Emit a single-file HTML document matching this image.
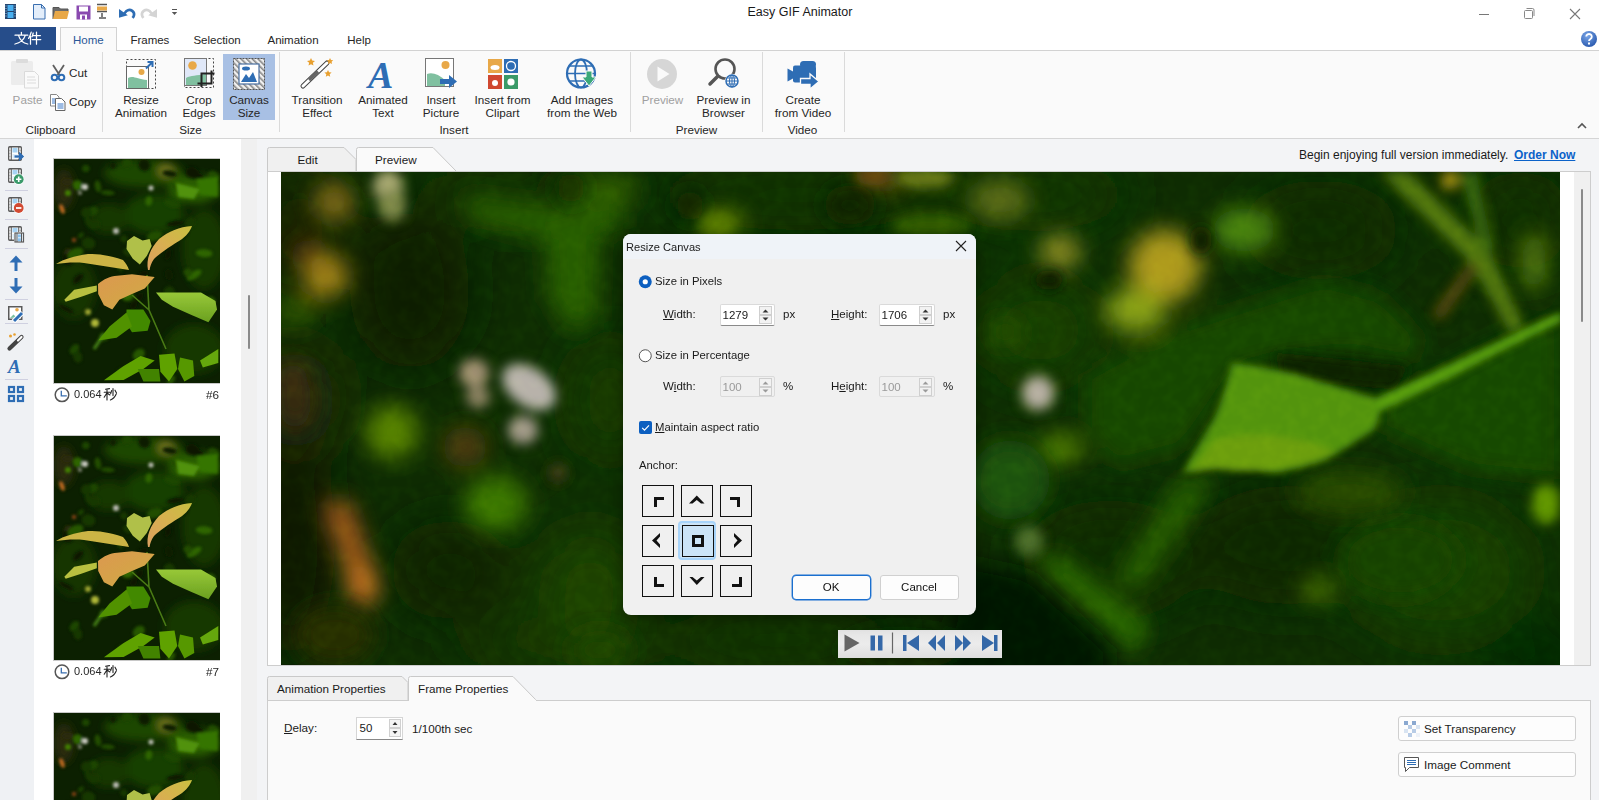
<!DOCTYPE html>
<html><head><meta charset="utf-8">
<style>
*{margin:0;padding:0;box-sizing:border-box}
html,body{width:1599px;height:800px;overflow:hidden;background:#fff;font-family:"Liberation Sans",sans-serif;font-size:12px;color:#1e1e1e}
.a{position:absolute}
.t{position:absolute;white-space:nowrap;line-height:1}
svg{position:absolute;overflow:visible}
</style></head><body>
<div class="a" style="left:0px;top:0px;width:1599px;height:51px;background:#fff"></div>
<div class="t" style="left:747.5px;top:5.62px;font-size:12.5px;color:#1a1a1a;">Easy GIF Animator</div>
<svg style="left:0;top:0" width="200" height="27" viewBox="0 0 200 27">
<rect x="5" y="4" width="11" height="15" fill="#24446e"/>
<rect x="7.5" y="5" width="6" height="6" fill="#4ab0f0"/>
<rect x="7.5" y="12" width="6" height="6" fill="#4ab0f0"/>
<path d="M6 5.5v1M6 8v1M6 10.5v1M6 13v1M6 15.5v1M15 5.5v1M15 8v1M15 10.5v1M15 13v1M15 15.5v1" stroke="#9ad0f8" stroke-width="1"/>
<path d="M33.5 4.5h8l3.5 3.5v11h-11.5z" fill="#e4eefa" stroke="#3a6fb0"/>
<path d="M41.5 4.5v3.5h3.5" fill="none" stroke="#3a6fb0"/>
<path d="M53 19V7.5h6l1.5 1.5h7.5v2" fill="#6a6a6a" stroke="#555"/>
<path d="M55 11h14l-2 8h-14z" fill="#e8a848"/>
<rect x="76.5" y="5.5" width="14" height="14" fill="#8a4ab0"/>
<rect x="79" y="6.5" width="9" height="5" fill="#fff"/>
<rect x="80" y="14.5" width="7" height="5" fill="#fff"/>
<rect x="82" y="15.5" width="3" height="4" fill="#8a4ab0"/>
<path d="M97 4.5h10M97 11.5h10" stroke="#555" stroke-width="1.5"/>
<rect x="97" y="6.5" width="10" height="4" fill="#e8a848"/>
<path d="M102 13v4M99 18h7" stroke="#555" stroke-width="1.5"/>
<path d="M119 9L119 17.8L127.8 15.2Z" fill="#2e6db4"/>
<path d="M123.5 14.5 L126.5 11 A4.6 4.6 0 0 1 133.6 16.5 L132.5 17.8" fill="none" stroke="#2e6db4" stroke-width="2.6"/>
<path d="M157 9L157 17.8L148.2 15.2Z" fill="#d4d4d4"/>
<path d="M152.5 14.5 L149.5 11 A4.6 4.6 0 0 0 142.4 16.5 L143.5 17.8" fill="none" stroke="#d4d4d4" stroke-width="2.6"/>
<path d="M172 9.5h5" stroke="#555" stroke-width="1"/>
<path d="M171.8 12h5.4l-2.7 3z" fill="#555"/>
</svg>
<div class="a" style="left:1479px;top:14px;width:10px;height:1px;background:#777"></div>
<svg style="left:1520px;top:6px" width="70" height="16" viewBox="1520 6 70 16">
<rect x="1524.5" y="10.5" width="8" height="8" rx="1" fill="none" stroke="#888"/>
<path d="M1526.5 8.5h6a1.5 1.5 0 0 1 1.5 1.5v6" fill="none" stroke="#888"/>
<path d="M1570 9l10 10M1580 9l-10 10" stroke="#777" stroke-width="1.1"/>
</svg>
<svg style="left:1579px;top:29px" width="20" height="20" viewBox="0 0 20 20">
<defs><radialGradient id="hg" cx="40%" cy="30%" r="70%"><stop offset="0" stop-color="#7aa6e8"/><stop offset="1" stop-color="#2c5cb0"/></radialGradient></defs>
<circle cx="10" cy="10" r="8" fill="url(#hg)"/>
<path d="M7.2 7.6a2.8 2.6 0 1 1 4.2 2.3c-1 .6-1.4 1-1.4 2.2" fill="none" stroke="#fff" stroke-width="1.8"/>
<rect x="9" y="13.5" width="2" height="2" fill="#fff"/>
</svg>
<div class="a" style="left:0px;top:27px;width:56px;height:24px;background:#264d8a"></div>
<svg style="left:0;top:0" width="60" height="52" viewBox="0 0 60 52"><g fill="none" stroke="#fff" stroke-width="1.25" stroke-linecap="round">
<path d="M21.4 32.3v2.2M15 35.2h12.8M18.6 35.6c1.2 4 4 7.2 9.2 8.4M25.2 35.6c-1.4 4.2-4.8 7.2-10.2 8.4"/>
<path d="M31.2 32.2c-0.6 2.4-1.6 4.6-2.6 6.2M30.5 36.2v8M33.2 33c-0.3 1.4-0.7 2.8-1.2 3.8M32.6 35.6h7.8M32.2 39.6h8.6M36.5 32.2v12"/>
</g></svg>
<div class="a" style="left:0px;top:50px;width:1599px;height:1px;background:#d2d2d2"></div>
<div class="a" style="left:60px;top:27px;width:57px;height:24px;background:#fafafa;border:1px solid #d2d2d2;border-bottom:none"></div>
<div class="t" style="left:73.0px;top:35.17px;font-size:11.5px;color:#2b5797;">Home</div>
<div class="t" style="left:130.4px;top:35.17px;font-size:11.5px;color:#262626;">Frames</div>
<div class="t" style="left:193.4px;top:35.17px;font-size:11.5px;color:#262626;">Selection</div>
<div class="t" style="left:267.5px;top:35.17px;font-size:11.5px;color:#262626;">Animation</div>
<div class="t" style="left:347.3px;top:35.17px;font-size:11.5px;color:#262626;">Help</div>
<div class="a" style="left:0px;top:51px;width:1599px;height:87px;background:#fafafa"></div>
<div class="a" style="left:0px;top:138px;width:1599px;height:1px;background:#d5d5d5"></div>
<div class="a" style="left:102px;top:52px;width:1px;height:80px;background:#dadada"></div>
<div class="a" style="left:279px;top:52px;width:1px;height:80px;background:#dadada"></div>
<div class="a" style="left:630px;top:52px;width:1px;height:80px;background:#dadada"></div>
<div class="a" style="left:762px;top:52px;width:1px;height:80px;background:#dadada"></div>
<div class="a" style="left:844px;top:52px;width:1px;height:80px;background:#dadada"></div>
<div class="a" style="left:223px;top:54px;width:52px;height:66px;background:#a8c0e4"></div>
<div class="t" style="left:12.6px;top:94.10px;font-size:11.7px;color:#a0a0a0;">Paste</div>
<div class="t" style="left:69.0px;top:67.10px;font-size:11.7px;color:#262626;">Cut</div>
<div class="t" style="left:69.0px;top:96.10px;font-size:11.7px;color:#262626;">Copy</div>
<div class="t" style="left:-149.5px;width:400px;text-align:center;top:124.10px;font-size:11.7px;color:#262626;">Clipboard</div>
<div class="t" style="left:-59.0px;width:400px;text-align:center;top:94.10px;font-size:11.7px;color:#262626;">Resize</div>
<div class="t" style="left:-59.0px;width:400px;text-align:center;top:107.10px;font-size:11.7px;color:#262626;">Animation</div>
<div class="t" style="left:-1.0px;width:400px;text-align:center;top:94.10px;font-size:11.7px;color:#262626;">Crop</div>
<div class="t" style="left:-1.0px;width:400px;text-align:center;top:107.10px;font-size:11.7px;color:#262626;">Edges</div>
<div class="t" style="left:49.0px;width:400px;text-align:center;top:94.10px;font-size:11.7px;color:#262626;">Canvas</div>
<div class="t" style="left:49.0px;width:400px;text-align:center;top:107.10px;font-size:11.7px;color:#262626;">Size</div>
<div class="t" style="left:-9.5px;width:400px;text-align:center;top:124.10px;font-size:11.7px;color:#262626;">Size</div>
<div class="t" style="left:117.0px;width:400px;text-align:center;top:94.10px;font-size:11.7px;color:#262626;">Transition</div>
<div class="t" style="left:117.0px;width:400px;text-align:center;top:107.10px;font-size:11.7px;color:#262626;">Effect</div>
<div class="t" style="left:183.0px;width:400px;text-align:center;top:94.10px;font-size:11.7px;color:#262626;">Animated</div>
<div class="t" style="left:183.0px;width:400px;text-align:center;top:107.10px;font-size:11.7px;color:#262626;">Text</div>
<div class="t" style="left:241.0px;width:400px;text-align:center;top:94.10px;font-size:11.7px;color:#262626;">Insert</div>
<div class="t" style="left:241.0px;width:400px;text-align:center;top:107.10px;font-size:11.7px;color:#262626;">Picture</div>
<div class="t" style="left:302.5px;width:400px;text-align:center;top:94.10px;font-size:11.7px;color:#262626;">Insert from</div>
<div class="t" style="left:302.5px;width:400px;text-align:center;top:107.10px;font-size:11.7px;color:#262626;">Clipart</div>
<div class="t" style="left:382.0px;width:400px;text-align:center;top:94.10px;font-size:11.7px;color:#262626;">Add Images</div>
<div class="t" style="left:382.0px;width:400px;text-align:center;top:107.10px;font-size:11.7px;color:#262626;">from the Web</div>
<div class="t" style="left:254.0px;width:400px;text-align:center;top:124.10px;font-size:11.7px;color:#262626;">Insert</div>
<div class="t" style="left:462.5px;width:400px;text-align:center;top:94.10px;font-size:11.7px;color:#a0a0a0;">Preview</div>
<div class="t" style="left:523.5px;width:400px;text-align:center;top:94.10px;font-size:11.7px;color:#262626;">Preview in</div>
<div class="t" style="left:523.5px;width:400px;text-align:center;top:107.10px;font-size:11.7px;color:#262626;">Browser</div>
<div class="t" style="left:496.5px;width:400px;text-align:center;top:124.10px;font-size:11.7px;color:#262626;">Preview</div>
<div class="t" style="left:603.0px;width:400px;text-align:center;top:94.10px;font-size:11.7px;color:#262626;">Create</div>
<div class="t" style="left:603.0px;width:400px;text-align:center;top:107.10px;font-size:11.7px;color:#262626;">from Video</div>
<div class="t" style="left:602.5px;width:400px;text-align:center;top:124.10px;font-size:11.7px;color:#262626;">Video</div>
<svg style="left:1575px;top:120px" width="14" height="10"><path d="M3 8l4-4 4 4" fill="none" stroke="#555" stroke-width="1.6"/></svg>
<svg style="left:0;top:51px" width="860" height="45" viewBox="0 51 860 45">
<!-- paste -->
<rect x="11" y="61" width="22" height="24" rx="1.5" fill="#ececec"/>
<rect x="16" y="59" width="12" height="4" rx="1" fill="#dcdcdc"/>
<path d="M24.5 71.5h10l4 4v12.5h-14z" fill="#fafafa" stroke="#dadada"/>
<path d="M27 77h8M27 80h9M27 83h9" stroke="#dcdcdc"/>
<!-- cut -->
<path d="M53 65l6.5 10M64 65l-6.5 10" stroke="#606060" stroke-width="1.8"/>
<circle cx="54.5" cy="77.5" r="2.8" fill="none" stroke="#2e6db4" stroke-width="2"/>
<circle cx="61.5" cy="77.5" r="2.8" fill="none" stroke="#2e6db4" stroke-width="2"/>
<!-- copy -->
<path d="M50.5 94.5h6l2.5 2.5v9h-8.5z" fill="#fff" stroke="#888"/>
<path d="M55.5 98.5h6l3.5 3.5v8.5h-9.5z" fill="#fff" stroke="#666"/>
<path d="M52 99h3M52 101h3M52 103h3M57.5 104h6M57.5 106h6M57.5 108h6" stroke="#3a78c8"/>
<!-- resize animation -->
<rect x="126.5" y="59.5" width="29" height="29" fill="none" stroke="#444" stroke-dasharray="2 2"/>
<rect x="126.5" y="66.5" width="22" height="22" fill="#fff" stroke="#666"/>
<path d="M128 78c5-3 9 1 19 2v8h-19z" fill="#80c0a0"/>
<circle cx="141.5" cy="72" r="3" fill="#e8a848"/>
<path d="M146 68.5l6-6M147.5 62h5v5" fill="none" stroke="#2e6db4" stroke-width="2"/>
<!-- crop edges -->
<rect x="184.5" y="58.5" width="29" height="29" fill="none" stroke="#444" stroke-dasharray="2 2"/>
<rect x="184.5" y="58.5" width="22" height="27" fill="#e0e8f8" stroke="#777"/>
<path d="M186 78c5-3 10-2 20-4v11h-20z" fill="#80c0a0"/>
<circle cx="192.5" cy="65.5" r="4.3" fill="#e8a848"/>
<path d="M201.5 73.5h10v10h-10z" fill="none" stroke="#222" stroke-width="2"/>
<path d="M201.5 83v4M197.5 83.5h4M211.5 73.5v-3M211.5 73.5h3" stroke="#222" stroke-width="2"/>
<!-- canvas size -->
<defs><pattern id="hatch" width="4" height="4" patternUnits="userSpaceOnUse" patternTransform="rotate(-45)"><rect width="4" height="4" fill="#f0f0f0"/><rect width="1.6" height="4" fill="#888"/></pattern></defs>
<rect x="233.5" y="58.5" width="31" height="31" fill="url(#hatch)" stroke="#555" stroke-dasharray="2 1"/>
<rect x="239" y="64" width="20" height="20" fill="#fff" stroke="#4a6fa0" stroke-width="1.2"/>
<rect x="241" y="66" width="16" height="16" fill="#fff"/>
<path d="M241 82l5-8 3 4 4-6 4 10z" fill="#2e6db4"/>
<ellipse cx="246" cy="68.5" rx="4" ry="2" fill="#2e6db4"/>
<!-- wand -->
<path d="M303 86l24-23" stroke="#444" stroke-width="5" stroke-linecap="round"/>
<path d="M303 86l24-23" stroke="#fff" stroke-width="3" stroke-linecap="round"/>
<path d="M309 80l9-8.5" stroke="#666" stroke-width="3.2"/>
<path d="M311 58l1.2 2.6 2.8.3-2.1 1.9.6 2.8-2.5-1.4-2.5 1.4.6-2.8-2.1-1.9 2.8-.3z" fill="#e8a030"/>
<path d="M330 58l1 2 2.2.3-1.6 1.5.4 2.2-2-1.1-2 1.1.4-2.2-1.6-1.5 2.2-.3z" fill="#e8a030"/>
<path d="M328 70l1.1 2.3 2.5.3-1.9 1.7.5 2.5-2.2-1.2-2.2 1.2.5-2.5-1.9-1.7 2.5-.3z" fill="#e8a030"/>
<!-- A -->
<text x="368" y="88" font-family="Liberation Serif" font-style="italic" font-weight="bold" font-size="38" fill="#2e6db4">A</text>
<!-- insert picture -->
<rect x="425.5" y="58.5" width="28" height="28" fill="#fff" stroke="#777"/>
<path d="M427 74c6-2 12 1 18 6v6h-18z" fill="#80c0a0"/>
<circle cx="445.5" cy="65" r="4" fill="#e8a848"/>
<path d="M440 79h9v-4l8 6.5-8 6.5v-4h-9z" fill="#2e6db4"/>
<!-- clipart -->
<rect x="488" y="59" width="14" height="14" fill="#e8a848"/>
<rect x="504" y="59" width="14" height="14" fill="#2e6db4"/>
<rect x="488" y="75" width="14" height="14" fill="#d04830"/>
<rect x="504" y="75" width="14" height="14" fill="#3a9a68"/>
<ellipse cx="495" cy="67.5" rx="4.5" ry="2.5" fill="#fff"/>
<circle cx="511" cy="66" r="4.5" fill="none" stroke="#fff" stroke-width="1.3"/>
<circle cx="495" cy="83" r="3" fill="#fff"/>
<circle cx="511" cy="82" r="3.6" fill="#fff"/>
<!-- globe -->
<circle cx="581" cy="73.5" r="14" fill="none" stroke="#2e6db4" stroke-width="2.2"/>
<ellipse cx="581" cy="73.5" rx="6" ry="14" fill="none" stroke="#2e6db4" stroke-width="1.8"/>
<path d="M567 73.5h28M569 66h24M569 81h24" stroke="#2e6db4" stroke-width="1.6"/>
<path d="M586 71h6v6h4l-7 9-7-9h4z" fill="#3aa878" stroke="#fafafa" stroke-width="1"/>
<!-- preview circle -->
<circle cx="662" cy="74" r="15" fill="#d6d6d6"/>
<path d="M657.5 66.5l12 7.5-12 7.5z" fill="#fafafa"/>
<!-- magnifier -->
<circle cx="725" cy="69" r="9.5" fill="none" stroke="#555" stroke-width="2.6"/>
<path d="M717.5 76.5l-7.5 7.5" stroke="#555" stroke-width="3.5" stroke-linecap="round"/>
<circle cx="732" cy="81" r="7.2" fill="#fafafa"/>
<circle cx="732" cy="81" r="6" fill="none" stroke="#2e6db4" stroke-width="1.5"/>
<path d="M726 81h12M732 75v12M727.5 78h9M727.5 84h9" stroke="#2e6db4" stroke-width="1"/>
<ellipse cx="732" cy="81" rx="2.5" ry="6" fill="none" stroke="#2e6db4" stroke-width="1"/>
<!-- camera -->
<path d="M787.5 68.5l5.5 3v7l-5.5 3z" fill="#2e6db4"/>
<rect x="800" y="61" width="16" height="7" rx="3.5" fill="#2e6db4"/>
<rect x="793" y="65.5" width="23" height="17" rx="2" fill="#2e6db4"/>
<path d="M800.5 78.5h9.5v-4.5l9 7.5-9 7.5v-4.5h-9.5z" fill="#2e6db4" stroke="#fafafa" stroke-width="1.3"/>
</svg>
<div class="a" style="left:0px;top:139px;width:34px;height:661px;background:#eff1f4"></div>
<div class="a" style="left:34px;top:139px;width:207px;height:661px;background:#fff"></div>
<div class="a" style="left:241px;top:139px;width:16px;height:661px;background:#f0f0f0"></div>
<div class="a" style="left:248px;top:295px;width:2px;height:54px;background:#8a8a8a;border-radius:1px"></div>
<div class="a" style="left:257px;top:139px;width:1342px;height:661px;background:#f3f4f6"></div>
<svg style="left:0;top:139px" width="34" height="270" viewBox="0 139 34 270">
<rect x="8.75" y="146.75" width="12.5" height="13.5" rx="1" fill="#fff" stroke="#5a5a5a" stroke-width="1.5"/>
<path d="M11.2 146.5v14M18.8 146.5v14" stroke="#5a5a5a" stroke-width="1.2"/>
<path d="M9.2 149h1.5M9.2 152h1.5M9.2 155h1.5M9.2 158h1.5M19.3 149h1.5M19.3 152h1.5M19.3 155h1.5M19.3 158h1.5" stroke="#fff" stroke-width="1"/>
<rect x="12.5" y="148" width="5" height="4.5" fill="#a8d4f4"/>
<rect x="12.5" y="154" width="5" height="4.5" fill="#d8ecfa"/><rect x="8.75" y="168.75" width="12.5" height="13.5" rx="1" fill="#fff" stroke="#5a5a5a" stroke-width="1.5"/>
<path d="M11.2 168.5v14M18.8 168.5v14" stroke="#5a5a5a" stroke-width="1.2"/>
<path d="M9.2 171h1.5M9.2 174h1.5M9.2 177h1.5M9.2 180h1.5M19.3 171h1.5M19.3 174h1.5M19.3 177h1.5M19.3 180h1.5" stroke="#fff" stroke-width="1"/>
<rect x="12.5" y="170" width="5" height="4.5" fill="#a8d4f4"/>
<rect x="12.5" y="176" width="5" height="4.5" fill="#d8ecfa"/><rect x="8.75" y="197.75" width="12.5" height="13.5" rx="1" fill="#fff" stroke="#5a5a5a" stroke-width="1.5"/>
<path d="M11.2 197.5v14M18.8 197.5v14" stroke="#5a5a5a" stroke-width="1.2"/>
<path d="M9.2 200h1.5M9.2 203h1.5M9.2 206h1.5M9.2 209h1.5M19.3 200h1.5M19.3 203h1.5M19.3 206h1.5M19.3 209h1.5" stroke="#fff" stroke-width="1"/>
<rect x="12.5" y="199" width="5" height="4.5" fill="#a8d4f4"/>
<rect x="12.5" y="205" width="5" height="4.5" fill="#d8ecfa"/><rect x="8.75" y="226.75" width="12.5" height="13.5" rx="1" fill="#fff" stroke="#5a5a5a" stroke-width="1.5"/>
<path d="M11.2 226.5v14M18.8 226.5v14" stroke="#5a5a5a" stroke-width="1.2"/>
<path d="M9.2 229h1.5M9.2 232h1.5M9.2 235h1.5M9.2 238h1.5M19.3 229h1.5M19.3 232h1.5M19.3 235h1.5M19.3 238h1.5" stroke="#fff" stroke-width="1"/>
<rect x="12.5" y="228" width="5" height="4.5" fill="#a8d4f4"/>
<rect x="12.5" y="234" width="5" height="4.5" fill="#d8ecfa"/>
<path d="M14.5 156.5h6.5" stroke="#fff" stroke-width="4"/>
<path d="M14.5 156.5h6" stroke="#2e6db4" stroke-width="2.4"/>
<path d="M19.5 152.5l4.2 4-4.2 4z" fill="#2e6db4" stroke="#2e6db4" stroke-width="1"/>
<circle cx="18.7" cy="179.2" r="5.6" fill="#fff"/>
<circle cx="18.7" cy="179.2" r="4.9" fill="#3a9a6a"/><path d="M16 179.2h5.4M18.7 176.5v5.4" stroke="#fff" stroke-width="1.6"/>
<circle cx="18.7" cy="208" r="5.6" fill="#fff"/>
<circle cx="18.7" cy="208" r="4.9" fill="#d24a32"/><path d="M16 208h5.4" stroke="#fff" stroke-width="1.8"/>
<rect x="14" y="232" width="10" height="10.5" fill="#fff"/>
<rect x="15" y="233" width="8.5" height="9" fill="#eaf4fc" stroke="#5a5a5a" stroke-width="1.2"/>
<path d="M17 233v9M21.5 233v9" stroke="#5a5a5a" stroke-width="1"/>
<rect x="17.8" y="234.5" width="3" height="2.8" fill="#8ac4f0"/><rect x="17.8" y="238.3" width="3" height="2.8" fill="#8ac4f0"/>
<path d="M16 271v-13" stroke="#2e6db4" stroke-width="3"/>
<path d="M9.5 262.5l6.5-7 6.5 7z" fill="#2e6db4"/>
<path d="M16 278v13" stroke="#2e6db4" stroke-width="3"/>
<path d="M9.5 286.5l6.5 7 6.5-7z" fill="#2e6db4"/>
<rect x="8.75" y="306.75" width="13" height="12.5" fill="#fff" stroke="#5a5a5a" stroke-width="1.5"/>
<circle cx="17" cy="309.8" r="1.8" fill="#e8a848"/>
<path d="M10 318l3.5-3.5 3 3" fill="#7ac0a0" stroke="none"/>
<path d="M13.5 321.5l9-9" stroke="#fff" stroke-width="5"/>
<path d="M14 321l8-8" stroke="#2e6db4" stroke-width="3"/>
<path d="M9.5 348.5l12-11.5" stroke="#444" stroke-width="4.2" stroke-linecap="round"/>
<path d="M18 340.5l3.5-3.5" stroke="#fff" stroke-width="2.2" stroke-linecap="round"/>
<circle cx="10.5" cy="336" r="1.5" fill="#e8a030"/><circle cx="14.5" cy="334.5" r="1.3" fill="#e8a030"/>
<text x="8" y="373" font-family="Liberation Serif" font-style="italic" font-weight="bold" font-size="19" fill="#2e6db4">A</text>
<g fill="none" stroke="#2e6db4" stroke-width="2.2">
<rect x="9" y="387" width="5" height="5"/><rect x="18" y="387" width="5" height="5"/>
<rect x="9" y="396" width="5" height="5"/><rect x="18" y="396" width="5" height="5"/>
</g>
<path d="M5 190.5h23M5 219.5h23M5 248.5h23M5 299.5h23M5 323.5h23M5 379.5h23" stroke="#cfd0e0"/>
</svg>
<div class="a" style="left:53px;top:158px;width:167px;height:226px;border:1px solid #c8c8c8;background:#0e2208"></div>
<svg style="left:54px;top:159px;overflow:hidden" width="166" height="224" viewBox="0 0 166 224">
<defs><filter id="tb_159" x="-20%" y="-20%" width="140%" height="140%"><feGaussianBlur stdDeviation="4"/></filter>
<filter id="tbm_159" x="-20%" y="-20%" width="140%" height="140%"><feGaussianBlur stdDeviation="1.5"/></filter>
<filter id="tb2_159" x="-20%" y="-20%" width="140%" height="140%"><feGaussianBlur stdDeviation="0.5"/></filter>
<linearGradient id="lgA_159" x1="0" y1="1" x2="1" y2="0"><stop offset="0" stop-color="#dca060"/><stop offset="0.5" stop-color="#d8b050"/><stop offset="1" stop-color="#c8c040"/></linearGradient>
<linearGradient id="lgB_159" x1="0" y1="0" x2="1" y2="1"><stop offset="0" stop-color="#dc9850"/><stop offset="0.6" stop-color="#d4a448"/><stop offset="1" stop-color="#b8b838"/></linearGradient>
<linearGradient id="lgC_159" x1="0" y1="0" x2="0" y2="1"><stop offset="0" stop-color="#98c838"/><stop offset="1" stop-color="#6aa020"/></linearGradient>
</defs>
<rect width="166" height="224" fill="#0c2001"/>
<g filter="url(#tb_159)">
<ellipse cx="90" cy="14" rx="40" ry="14" fill="#1e4603"/>
<ellipse cx="140" cy="30" rx="26" ry="14" fill="#295f04"/>
<ellipse cx="100" cy="55" rx="30" ry="20" fill="#193f03"/>
<ellipse cx="150" cy="90" rx="22" ry="40" fill="#153902"/>
<ellipse cx="20" cy="130" rx="22" ry="30" fill="#173502"/>
<ellipse cx="140" cy="190" rx="30" ry="25" fill="#153902"/>
<ellipse cx="55" cy="60" rx="20" ry="15" fill="#173702"/>
<ellipse cx="10" cy="30" rx="10" ry="20" fill="#2a2a0a"/>
<ellipse cx="112" cy="12" rx="8" ry="6" fill="#7a7a20"/>
</g>
<g filter="url(#tbm_159)">
<ellipse cx="53.8" cy="33.8" rx="6.9" ry="2.3" fill="#204e03" transform="rotate(4 53.8 33.8)"/>
<ellipse cx="14.3" cy="93.7" rx="4.4" ry="4.2" fill="#2a2a0a" transform="rotate(-53 14.3 93.7)"/>
<ellipse cx="157.3" cy="141.3" rx="3.4" ry="4.3" fill="#265604" transform="rotate(-54 157.3 141.3)"/>
<ellipse cx="23.9" cy="26.4" rx="4.9" ry="5.3" fill="#2d6504" transform="rotate(-38 23.9 26.4)"/>
<ellipse cx="94.8" cy="42.1" rx="3.6" ry="4.8" fill="#2d6504" transform="rotate(8 94.8 42.1)"/>
<ellipse cx="49.8" cy="177.9" rx="4.5" ry="4.3" fill="#204e03" transform="rotate(3 49.8 177.9)"/>
<ellipse cx="121.1" cy="64.5" rx="8.9" ry="2.5" fill="#091901" transform="rotate(-10 121.1 64.5)"/>
<ellipse cx="159.7" cy="17.4" rx="6.3" ry="5.2" fill="#204e03" transform="rotate(38 159.7 17.4)"/>
<ellipse cx="115.4" cy="133.1" rx="5.7" ry="5.4" fill="#163902" transform="rotate(53 115.4 133.1)"/>
<ellipse cx="115.7" cy="14.6" rx="7.4" ry="3.2" fill="#0b1e01" transform="rotate(9 115.7 14.6)"/>
<ellipse cx="136.4" cy="63.7" rx="5.3" ry="4.7" fill="#163902" transform="rotate(-57 136.4 63.7)"/>
<ellipse cx="36.2" cy="64.4" rx="7.4" ry="3.6" fill="#163902" transform="rotate(50 36.2 64.4)"/>
<ellipse cx="13.4" cy="100.6" rx="6.3" ry="5.5" fill="#0b1901" transform="rotate(38 13.4 100.6)"/>
<ellipse cx="117.3" cy="221.0" rx="5.3" ry="2.9" fill="#265604" transform="rotate(-50 117.3 221.0)"/>
<ellipse cx="38.5" cy="52.3" rx="5.9" ry="4.4" fill="#1c4603" transform="rotate(-28 38.5 52.3)"/>
<ellipse cx="24.2" cy="119.7" rx="6.7" ry="3.3" fill="#091901" transform="rotate(-45 24.2 119.7)"/>
<ellipse cx="85.6" cy="138.3" rx="3.3" ry="5.6" fill="#091901" transform="rotate(34 85.6 138.3)"/>
<ellipse cx="65.4" cy="107.9" rx="5.4" ry="2.8" fill="#163902" transform="rotate(58 65.4 107.9)"/>
<ellipse cx="26.9" cy="76.2" rx="3.3" ry="2.0" fill="#1c4603" transform="rotate(-42 26.9 76.2)"/>
<ellipse cx="34.5" cy="84.3" rx="6.8" ry="5.8" fill="#163902" transform="rotate(12 34.5 84.3)"/>
<ellipse cx="20.4" cy="190.2" rx="5.8" ry="3.9" fill="#1c4603" transform="rotate(-50 20.4 190.2)"/>
<ellipse cx="114.9" cy="115.7" rx="4.2" ry="5.8" fill="#0b1e01" transform="rotate(-17 114.9 115.7)"/>
<ellipse cx="90.2" cy="6.1" rx="6.2" ry="5.9" fill="#0b1e01" transform="rotate(44 90.2 6.1)"/>
<ellipse cx="140.3" cy="116.1" rx="8.4" ry="3.4" fill="#2d6504" transform="rotate(-33 140.3 116.1)"/>
<ellipse cx="129.3" cy="73.8" rx="4.3" ry="5.2" fill="#091901" transform="rotate(58 129.3 73.8)"/>
<ellipse cx="32.4" cy="53.6" rx="5.4" ry="5.2" fill="#163902" transform="rotate(-36 32.4 53.6)"/>
<ellipse cx="59.0" cy="6.5" rx="3.2" ry="3.1" fill="#0b1e01" transform="rotate(-29 59.0 6.5)"/>
<ellipse cx="100.5" cy="77.1" rx="7.9" ry="4.9" fill="#204e03" transform="rotate(-18 100.5 77.1)"/>
<ellipse cx="13.4" cy="22.9" rx="5.8" ry="3.4" fill="#2a2a0a" transform="rotate(-2 13.4 22.9)"/>
<ellipse cx="79.6" cy="146.3" rx="3.5" ry="4.6" fill="#091901" transform="rotate(49 79.6 146.3)"/>
<ellipse cx="118.1" cy="44.6" rx="8.3" ry="3.7" fill="#1c4603" transform="rotate(16 118.1 44.6)"/>
<ellipse cx="66.6" cy="212.1" rx="4.0" ry="2.5" fill="#163902" transform="rotate(-42 66.6 212.1)"/>
<ellipse cx="133.9" cy="32.7" rx="8.0" ry="5.9" fill="#204e03" transform="rotate(19 133.9 32.7)"/>
<ellipse cx="124.4" cy="31.2" rx="8.9" ry="2.8" fill="#1c4603" transform="rotate(45 124.4 31.2)"/>
<ellipse cx="41.8" cy="65.6" rx="4.4" ry="4.3" fill="#163902" transform="rotate(-29 41.8 65.6)"/>
<ellipse cx="138.5" cy="13.6" rx="7.4" ry="5.6" fill="#091901" transform="rotate(19 138.5 13.6)"/>
<ellipse cx="150.1" cy="94.2" rx="8.5" ry="4.0" fill="#2d6504" transform="rotate(4 150.1 94.2)"/>
<ellipse cx="84.8" cy="195.5" rx="6.7" ry="5.1" fill="#265604" transform="rotate(-42 84.8 195.5)"/>
<ellipse cx="78.6" cy="162.4" rx="5.0" ry="4.1" fill="#091901" transform="rotate(7 78.6 162.4)"/>
<ellipse cx="31.8" cy="9.5" rx="3.6" ry="3.8" fill="#1c4603" transform="rotate(-57 31.8 9.5)"/>
<ellipse cx="73.6" cy="137.2" rx="6.1" ry="4.8" fill="#2d6504" transform="rotate(-6 73.6 137.2)"/>
<ellipse cx="134.0" cy="113.7" rx="4.5" ry="4.1" fill="#204e03" transform="rotate(45 134.0 113.7)"/>
<ellipse cx="74.3" cy="93.3" rx="5.4" ry="3.3" fill="#163902" transform="rotate(21 74.3 93.3)"/>
<ellipse cx="12.1" cy="150.0" rx="8.4" ry="2.6" fill="#0b1901" transform="rotate(26 12.1 150.0)"/>
<ellipse cx="23.7" cy="197.8" rx="4.3" ry="5.8" fill="#163902" transform="rotate(-12 23.7 197.8)"/>
<ellipse cx="69.9" cy="79.9" rx="3.6" ry="3.5" fill="#163902" transform="rotate(-19 69.9 79.9)"/>
<ellipse cx="73.1" cy="4.1" rx="5.0" ry="4.5" fill="#1c4603" transform="rotate(1 73.1 4.1)"/>
<ellipse cx="145.5" cy="18.8" rx="4.6" ry="5.6" fill="#091901" transform="rotate(-38 145.5 18.8)"/>
<ellipse cx="21.5" cy="94.6" rx="8.5" ry="5.3" fill="#265604" transform="rotate(-29 21.5 94.6)"/>
<ellipse cx="89.1" cy="115.3" rx="6.0" ry="3.3" fill="#091901" transform="rotate(-27 89.1 115.3)"/>
<ellipse cx="114.2" cy="95.3" rx="3.4" ry="5.8" fill="#091901" transform="rotate(16 114.2 95.3)"/>
<ellipse cx="43.9" cy="27.3" rx="3.1" ry="6.0" fill="#204e03" transform="rotate(-10 43.9 27.3)"/>

<path d="M122 24 L146 30 L140 40 L124 38 Z" fill="#51920a"/>
<path d="M142 20 L164 18 L164 38 L146 36 Z" fill="#347406"/>
<circle cx="31" cy="28" r="3" fill="#d0d0c8"/>
<circle cx="97" cy="29" r="2.5" fill="#c8c8c0"/>
<circle cx="62" cy="72" r="3" fill="#c0c0b8"/>
<circle cx="26" cy="34" r="1.8" fill="#b0b0a0"/>
<ellipse cx="8" cy="50" rx="2.2" ry="5" fill="#c06a20" transform="rotate(-20 8 50)"/>
<circle cx="20" cy="81" r="2" fill="#a04a18"/>
<circle cx="14" cy="34" r="3" fill="#438306"/>
<circle cx="41" cy="164" r="4" fill="#b0b838"/>
<circle cx="34" cy="153" r="3" fill="#a0a830"/>
<path d="M40 190 L50 175" stroke="#4a8a18" stroke-width="3"/>
</g>
<g filter="url(#tb2_159)">
<path d="M78 136 L95 151 L112 190 M93 116 L95 151" fill="none" stroke="#4a7a14" stroke-width="1.6"/>
<path d="M94 111 C92 100 96 90 105 80 C115 72 125 68 138 67 C136 72 133 77 125 82 C115 88 105 95 100 100 C97 104 96 108 95.6 111 Z" fill="url(#lgA_159)"/>
<path d="M73 82 L80 77 L88.6 81.6 L95.6 80 L97.7 87 L92.8 97 L85.8 105.4 L78.8 99.8 L72.5 90 Z" fill="#b0c048"/>
<path d="M2 105 C10 100 20 97 34 95 C45 95 55 96 69 101 C72 104 74 108 75 111 C60 109 45 106 30 104 C20 103 10 104 2 105 Z" fill="#ccb444"/>
<path d="M44 125 C50 120 56 117 63 116.7 L78 115.2 L100.7 118 L90.8 129.4 L78 135 L65.4 140.7 L58.3 150.6 L49.9 146.3 L44.2 135 Z" fill="url(#lgB_159)"/>
<path d="M10.3 140.7 L20.2 130.8 L42.8 126.5 L42.8 132.2 L27.3 137.8 L11.7 142.8 Z" fill="#b8c040"/>
<path d="M102 133.6 L126 133.6 L147 133.6 L161.5 142 L163 150.6 L154.4 163.3 L137.5 156 L119 147.7 L107.8 140.7 Z" fill="url(#lgC_159)"/>
<path d="M72.5 150.6 L89.4 150.6 L96.5 161.9 L93.7 171.8 L78 173.2 L72.5 164.7 Z" fill="#438905"/>
<path d="M44.2 181.6 L55.5 167.5 L72.5 153.4 L78 167.5 L62.6 178.8 Z" fill="#519206"/>
<path d="M49.9 221.2 L69.6 207 L86.6 197 L100.7 201.4 L89.4 210 L69.6 221 Z" fill="#5fa206"/>
<path d="M105 195.8 L120.5 194.4 L123.3 210 L115 222.6 L106.4 212.7 Z" fill="#5fa206"/>
<path d="M126 198.6 L139 201.4 L140.3 217 L130.4 222.6 L124 210 Z" fill="#569806"/>
<path d="M146 201.4 L164.3 190 L164.3 204 L148.8 208.5 Z" fill="#65a708"/>
<path d="M83.8 210 L105 210 L106.4 222.6 L89.4 222.6 Z" fill="#438305"/>
</g>
</svg>
<svg style="left:54px;top:386px" width="16" height="16"><circle cx="8" cy="8.8" r="6.8" fill="none" stroke="#555" stroke-width="1.5"/><path d="M7.3 4.8V9.8h5.5" fill="none" stroke="#3a6fb0" stroke-width="1.3"/></svg>
<div class="t" style="left:74.0px;top:388.99px;font-size:11px;color:#262626;">0.064</div>
<svg style="left:100px;top:386px" width="20" height="16" viewBox="100 386 20 16"><g fill="none" stroke="#222" stroke-width="1.1" stroke-linecap="round" transform="translate(0 0)">
<path d="M105.5 389.2l4-0.6M104.2 392.2h5.8M107 389v11M107 392.8l-2.8 4.4M107.3 393.2l2.6 1.8M113 388.6v7M111.6 390.6l-0.9 3M115 390.2l1.5 2.8M116.2 394c-1.2 3-3 5-5.8 6"/></g></svg>
<div class="t" style="left:-181.0px;width:400px;text-align:right;top:388.60px;font-size:11.7px;color:#262626;">#6</div>
<div class="a" style="left:53px;top:435px;width:167px;height:226px;border:1px solid #c8c8c8;background:#0e2208"></div>
<svg style="left:54px;top:436px;overflow:hidden" width="166" height="224" viewBox="0 0 166 224">
<defs><filter id="tb_436" x="-20%" y="-20%" width="140%" height="140%"><feGaussianBlur stdDeviation="4"/></filter>
<filter id="tbm_436" x="-20%" y="-20%" width="140%" height="140%"><feGaussianBlur stdDeviation="1.5"/></filter>
<filter id="tb2_436" x="-20%" y="-20%" width="140%" height="140%"><feGaussianBlur stdDeviation="0.5"/></filter>
<linearGradient id="lgA_436" x1="0" y1="1" x2="1" y2="0"><stop offset="0" stop-color="#dca060"/><stop offset="0.5" stop-color="#d8b050"/><stop offset="1" stop-color="#c8c040"/></linearGradient>
<linearGradient id="lgB_436" x1="0" y1="0" x2="1" y2="1"><stop offset="0" stop-color="#dc9850"/><stop offset="0.6" stop-color="#d4a448"/><stop offset="1" stop-color="#b8b838"/></linearGradient>
<linearGradient id="lgC_436" x1="0" y1="0" x2="0" y2="1"><stop offset="0" stop-color="#98c838"/><stop offset="1" stop-color="#6aa020"/></linearGradient>
</defs>
<rect width="166" height="224" fill="#0c2001"/>
<g filter="url(#tb_436)">
<ellipse cx="90" cy="14" rx="40" ry="14" fill="#1e4603"/>
<ellipse cx="140" cy="30" rx="26" ry="14" fill="#295f04"/>
<ellipse cx="100" cy="55" rx="30" ry="20" fill="#193f03"/>
<ellipse cx="150" cy="90" rx="22" ry="40" fill="#153902"/>
<ellipse cx="20" cy="130" rx="22" ry="30" fill="#173502"/>
<ellipse cx="140" cy="190" rx="30" ry="25" fill="#153902"/>
<ellipse cx="55" cy="60" rx="20" ry="15" fill="#173702"/>
<ellipse cx="10" cy="30" rx="10" ry="20" fill="#2a2a0a"/>
<ellipse cx="112" cy="12" rx="8" ry="6" fill="#7a7a20"/>
</g>
<g filter="url(#tbm_436)">
<ellipse cx="53.8" cy="33.8" rx="6.9" ry="2.3" fill="#204e03" transform="rotate(4 53.8 33.8)"/>
<ellipse cx="14.3" cy="93.7" rx="4.4" ry="4.2" fill="#2a2a0a" transform="rotate(-53 14.3 93.7)"/>
<ellipse cx="157.3" cy="141.3" rx="3.4" ry="4.3" fill="#265604" transform="rotate(-54 157.3 141.3)"/>
<ellipse cx="23.9" cy="26.4" rx="4.9" ry="5.3" fill="#2d6504" transform="rotate(-38 23.9 26.4)"/>
<ellipse cx="94.8" cy="42.1" rx="3.6" ry="4.8" fill="#2d6504" transform="rotate(8 94.8 42.1)"/>
<ellipse cx="49.8" cy="177.9" rx="4.5" ry="4.3" fill="#204e03" transform="rotate(3 49.8 177.9)"/>
<ellipse cx="121.1" cy="64.5" rx="8.9" ry="2.5" fill="#091901" transform="rotate(-10 121.1 64.5)"/>
<ellipse cx="159.7" cy="17.4" rx="6.3" ry="5.2" fill="#204e03" transform="rotate(38 159.7 17.4)"/>
<ellipse cx="115.4" cy="133.1" rx="5.7" ry="5.4" fill="#163902" transform="rotate(53 115.4 133.1)"/>
<ellipse cx="115.7" cy="14.6" rx="7.4" ry="3.2" fill="#0b1e01" transform="rotate(9 115.7 14.6)"/>
<ellipse cx="136.4" cy="63.7" rx="5.3" ry="4.7" fill="#163902" transform="rotate(-57 136.4 63.7)"/>
<ellipse cx="36.2" cy="64.4" rx="7.4" ry="3.6" fill="#163902" transform="rotate(50 36.2 64.4)"/>
<ellipse cx="13.4" cy="100.6" rx="6.3" ry="5.5" fill="#0b1901" transform="rotate(38 13.4 100.6)"/>
<ellipse cx="117.3" cy="221.0" rx="5.3" ry="2.9" fill="#265604" transform="rotate(-50 117.3 221.0)"/>
<ellipse cx="38.5" cy="52.3" rx="5.9" ry="4.4" fill="#1c4603" transform="rotate(-28 38.5 52.3)"/>
<ellipse cx="24.2" cy="119.7" rx="6.7" ry="3.3" fill="#091901" transform="rotate(-45 24.2 119.7)"/>
<ellipse cx="85.6" cy="138.3" rx="3.3" ry="5.6" fill="#091901" transform="rotate(34 85.6 138.3)"/>
<ellipse cx="65.4" cy="107.9" rx="5.4" ry="2.8" fill="#163902" transform="rotate(58 65.4 107.9)"/>
<ellipse cx="26.9" cy="76.2" rx="3.3" ry="2.0" fill="#1c4603" transform="rotate(-42 26.9 76.2)"/>
<ellipse cx="34.5" cy="84.3" rx="6.8" ry="5.8" fill="#163902" transform="rotate(12 34.5 84.3)"/>
<ellipse cx="20.4" cy="190.2" rx="5.8" ry="3.9" fill="#1c4603" transform="rotate(-50 20.4 190.2)"/>
<ellipse cx="114.9" cy="115.7" rx="4.2" ry="5.8" fill="#0b1e01" transform="rotate(-17 114.9 115.7)"/>
<ellipse cx="90.2" cy="6.1" rx="6.2" ry="5.9" fill="#0b1e01" transform="rotate(44 90.2 6.1)"/>
<ellipse cx="140.3" cy="116.1" rx="8.4" ry="3.4" fill="#2d6504" transform="rotate(-33 140.3 116.1)"/>
<ellipse cx="129.3" cy="73.8" rx="4.3" ry="5.2" fill="#091901" transform="rotate(58 129.3 73.8)"/>
<ellipse cx="32.4" cy="53.6" rx="5.4" ry="5.2" fill="#163902" transform="rotate(-36 32.4 53.6)"/>
<ellipse cx="59.0" cy="6.5" rx="3.2" ry="3.1" fill="#0b1e01" transform="rotate(-29 59.0 6.5)"/>
<ellipse cx="100.5" cy="77.1" rx="7.9" ry="4.9" fill="#204e03" transform="rotate(-18 100.5 77.1)"/>
<ellipse cx="13.4" cy="22.9" rx="5.8" ry="3.4" fill="#2a2a0a" transform="rotate(-2 13.4 22.9)"/>
<ellipse cx="79.6" cy="146.3" rx="3.5" ry="4.6" fill="#091901" transform="rotate(49 79.6 146.3)"/>
<ellipse cx="118.1" cy="44.6" rx="8.3" ry="3.7" fill="#1c4603" transform="rotate(16 118.1 44.6)"/>
<ellipse cx="66.6" cy="212.1" rx="4.0" ry="2.5" fill="#163902" transform="rotate(-42 66.6 212.1)"/>
<ellipse cx="133.9" cy="32.7" rx="8.0" ry="5.9" fill="#204e03" transform="rotate(19 133.9 32.7)"/>
<ellipse cx="124.4" cy="31.2" rx="8.9" ry="2.8" fill="#1c4603" transform="rotate(45 124.4 31.2)"/>
<ellipse cx="41.8" cy="65.6" rx="4.4" ry="4.3" fill="#163902" transform="rotate(-29 41.8 65.6)"/>
<ellipse cx="138.5" cy="13.6" rx="7.4" ry="5.6" fill="#091901" transform="rotate(19 138.5 13.6)"/>
<ellipse cx="150.1" cy="94.2" rx="8.5" ry="4.0" fill="#2d6504" transform="rotate(4 150.1 94.2)"/>
<ellipse cx="84.8" cy="195.5" rx="6.7" ry="5.1" fill="#265604" transform="rotate(-42 84.8 195.5)"/>
<ellipse cx="78.6" cy="162.4" rx="5.0" ry="4.1" fill="#091901" transform="rotate(7 78.6 162.4)"/>
<ellipse cx="31.8" cy="9.5" rx="3.6" ry="3.8" fill="#1c4603" transform="rotate(-57 31.8 9.5)"/>
<ellipse cx="73.6" cy="137.2" rx="6.1" ry="4.8" fill="#2d6504" transform="rotate(-6 73.6 137.2)"/>
<ellipse cx="134.0" cy="113.7" rx="4.5" ry="4.1" fill="#204e03" transform="rotate(45 134.0 113.7)"/>
<ellipse cx="74.3" cy="93.3" rx="5.4" ry="3.3" fill="#163902" transform="rotate(21 74.3 93.3)"/>
<ellipse cx="12.1" cy="150.0" rx="8.4" ry="2.6" fill="#0b1901" transform="rotate(26 12.1 150.0)"/>
<ellipse cx="23.7" cy="197.8" rx="4.3" ry="5.8" fill="#163902" transform="rotate(-12 23.7 197.8)"/>
<ellipse cx="69.9" cy="79.9" rx="3.6" ry="3.5" fill="#163902" transform="rotate(-19 69.9 79.9)"/>
<ellipse cx="73.1" cy="4.1" rx="5.0" ry="4.5" fill="#1c4603" transform="rotate(1 73.1 4.1)"/>
<ellipse cx="145.5" cy="18.8" rx="4.6" ry="5.6" fill="#091901" transform="rotate(-38 145.5 18.8)"/>
<ellipse cx="21.5" cy="94.6" rx="8.5" ry="5.3" fill="#265604" transform="rotate(-29 21.5 94.6)"/>
<ellipse cx="89.1" cy="115.3" rx="6.0" ry="3.3" fill="#091901" transform="rotate(-27 89.1 115.3)"/>
<ellipse cx="114.2" cy="95.3" rx="3.4" ry="5.8" fill="#091901" transform="rotate(16 114.2 95.3)"/>
<ellipse cx="43.9" cy="27.3" rx="3.1" ry="6.0" fill="#204e03" transform="rotate(-10 43.9 27.3)"/>

<path d="M122 24 L146 30 L140 40 L124 38 Z" fill="#51920a"/>
<path d="M142 20 L164 18 L164 38 L146 36 Z" fill="#347406"/>
<circle cx="31" cy="28" r="3" fill="#d0d0c8"/>
<circle cx="97" cy="29" r="2.5" fill="#c8c8c0"/>
<circle cx="62" cy="72" r="3" fill="#c0c0b8"/>
<circle cx="26" cy="34" r="1.8" fill="#b0b0a0"/>
<ellipse cx="8" cy="50" rx="2.2" ry="5" fill="#c06a20" transform="rotate(-20 8 50)"/>
<circle cx="20" cy="81" r="2" fill="#a04a18"/>
<circle cx="14" cy="34" r="3" fill="#438306"/>
<circle cx="41" cy="164" r="4" fill="#b0b838"/>
<circle cx="34" cy="153" r="3" fill="#a0a830"/>
<path d="M40 190 L50 175" stroke="#4a8a18" stroke-width="3"/>
</g>
<g filter="url(#tb2_436)">
<path d="M78 136 L95 151 L112 190 M93 116 L95 151" fill="none" stroke="#4a7a14" stroke-width="1.6"/>
<path d="M94 111 C92 100 96 90 105 80 C115 72 125 68 138 67 C136 72 133 77 125 82 C115 88 105 95 100 100 C97 104 96 108 95.6 111 Z" fill="url(#lgA_436)"/>
<path d="M73 82 L80 77 L88.6 81.6 L95.6 80 L97.7 87 L92.8 97 L85.8 105.4 L78.8 99.8 L72.5 90 Z" fill="#b0c048"/>
<path d="M2 105 C10 100 20 97 34 95 C45 95 55 96 69 101 C72 104 74 108 75 111 C60 109 45 106 30 104 C20 103 10 104 2 105 Z" fill="#ccb444"/>
<path d="M44 125 C50 120 56 117 63 116.7 L78 115.2 L100.7 118 L90.8 129.4 L78 135 L65.4 140.7 L58.3 150.6 L49.9 146.3 L44.2 135 Z" fill="url(#lgB_436)"/>
<path d="M10.3 140.7 L20.2 130.8 L42.8 126.5 L42.8 132.2 L27.3 137.8 L11.7 142.8 Z" fill="#b8c040"/>
<path d="M102 133.6 L126 133.6 L147 133.6 L161.5 142 L163 150.6 L154.4 163.3 L137.5 156 L119 147.7 L107.8 140.7 Z" fill="url(#lgC_436)"/>
<path d="M72.5 150.6 L89.4 150.6 L96.5 161.9 L93.7 171.8 L78 173.2 L72.5 164.7 Z" fill="#438905"/>
<path d="M44.2 181.6 L55.5 167.5 L72.5 153.4 L78 167.5 L62.6 178.8 Z" fill="#519206"/>
<path d="M49.9 221.2 L69.6 207 L86.6 197 L100.7 201.4 L89.4 210 L69.6 221 Z" fill="#5fa206"/>
<path d="M105 195.8 L120.5 194.4 L123.3 210 L115 222.6 L106.4 212.7 Z" fill="#5fa206"/>
<path d="M126 198.6 L139 201.4 L140.3 217 L130.4 222.6 L124 210 Z" fill="#569806"/>
<path d="M146 201.4 L164.3 190 L164.3 204 L148.8 208.5 Z" fill="#65a708"/>
<path d="M83.8 210 L105 210 L106.4 222.6 L89.4 222.6 Z" fill="#438305"/>
</g>
</svg>
<svg style="left:54px;top:663px" width="16" height="16"><circle cx="8" cy="8.8" r="6.8" fill="none" stroke="#555" stroke-width="1.5"/><path d="M7.3 4.8V9.8h5.5" fill="none" stroke="#3a6fb0" stroke-width="1.3"/></svg>
<div class="t" style="left:74.0px;top:665.99px;font-size:11px;color:#262626;">0.064</div>
<svg style="left:100px;top:663px" width="20" height="16" viewBox="100 663 20 16"><g fill="none" stroke="#222" stroke-width="1.1" stroke-linecap="round" transform="translate(0 277)">
<path d="M105.5 389.2l4-0.6M104.2 392.2h5.8M107 389v11M107 392.8l-2.8 4.4M107.3 393.2l2.6 1.8M113 388.6v7M111.6 390.6l-0.9 3M115 390.2l1.5 2.8M116.2 394c-1.2 3-3 5-5.8 6"/></g></svg>
<div class="t" style="left:-181.0px;width:400px;text-align:right;top:665.60px;font-size:11.7px;color:#262626;">#7</div>
<div class="a" style="left:53px;top:712px;width:167px;height:226px;border:1px solid #c8c8c8;background:#0e2208"></div>
<svg style="left:54px;top:713px;overflow:hidden" width="166" height="224" viewBox="0 0 166 224">
<defs><filter id="tb_713" x="-20%" y="-20%" width="140%" height="140%"><feGaussianBlur stdDeviation="4"/></filter>
<filter id="tbm_713" x="-20%" y="-20%" width="140%" height="140%"><feGaussianBlur stdDeviation="1.5"/></filter>
<filter id="tb2_713" x="-20%" y="-20%" width="140%" height="140%"><feGaussianBlur stdDeviation="0.5"/></filter>
<linearGradient id="lgA_713" x1="0" y1="1" x2="1" y2="0"><stop offset="0" stop-color="#dca060"/><stop offset="0.5" stop-color="#d8b050"/><stop offset="1" stop-color="#c8c040"/></linearGradient>
<linearGradient id="lgB_713" x1="0" y1="0" x2="1" y2="1"><stop offset="0" stop-color="#dc9850"/><stop offset="0.6" stop-color="#d4a448"/><stop offset="1" stop-color="#b8b838"/></linearGradient>
<linearGradient id="lgC_713" x1="0" y1="0" x2="0" y2="1"><stop offset="0" stop-color="#98c838"/><stop offset="1" stop-color="#6aa020"/></linearGradient>
</defs>
<rect width="166" height="224" fill="#0c2001"/>
<g filter="url(#tb_713)">
<ellipse cx="90" cy="14" rx="40" ry="14" fill="#1e4603"/>
<ellipse cx="140" cy="30" rx="26" ry="14" fill="#295f04"/>
<ellipse cx="100" cy="55" rx="30" ry="20" fill="#193f03"/>
<ellipse cx="150" cy="90" rx="22" ry="40" fill="#153902"/>
<ellipse cx="20" cy="130" rx="22" ry="30" fill="#173502"/>
<ellipse cx="140" cy="190" rx="30" ry="25" fill="#153902"/>
<ellipse cx="55" cy="60" rx="20" ry="15" fill="#173702"/>
<ellipse cx="10" cy="30" rx="10" ry="20" fill="#2a2a0a"/>
<ellipse cx="112" cy="12" rx="8" ry="6" fill="#7a7a20"/>
</g>
<g filter="url(#tbm_713)">
<ellipse cx="53.8" cy="33.8" rx="6.9" ry="2.3" fill="#204e03" transform="rotate(4 53.8 33.8)"/>
<ellipse cx="14.3" cy="93.7" rx="4.4" ry="4.2" fill="#2a2a0a" transform="rotate(-53 14.3 93.7)"/>
<ellipse cx="157.3" cy="141.3" rx="3.4" ry="4.3" fill="#265604" transform="rotate(-54 157.3 141.3)"/>
<ellipse cx="23.9" cy="26.4" rx="4.9" ry="5.3" fill="#2d6504" transform="rotate(-38 23.9 26.4)"/>
<ellipse cx="94.8" cy="42.1" rx="3.6" ry="4.8" fill="#2d6504" transform="rotate(8 94.8 42.1)"/>
<ellipse cx="49.8" cy="177.9" rx="4.5" ry="4.3" fill="#204e03" transform="rotate(3 49.8 177.9)"/>
<ellipse cx="121.1" cy="64.5" rx="8.9" ry="2.5" fill="#091901" transform="rotate(-10 121.1 64.5)"/>
<ellipse cx="159.7" cy="17.4" rx="6.3" ry="5.2" fill="#204e03" transform="rotate(38 159.7 17.4)"/>
<ellipse cx="115.4" cy="133.1" rx="5.7" ry="5.4" fill="#163902" transform="rotate(53 115.4 133.1)"/>
<ellipse cx="115.7" cy="14.6" rx="7.4" ry="3.2" fill="#0b1e01" transform="rotate(9 115.7 14.6)"/>
<ellipse cx="136.4" cy="63.7" rx="5.3" ry="4.7" fill="#163902" transform="rotate(-57 136.4 63.7)"/>
<ellipse cx="36.2" cy="64.4" rx="7.4" ry="3.6" fill="#163902" transform="rotate(50 36.2 64.4)"/>
<ellipse cx="13.4" cy="100.6" rx="6.3" ry="5.5" fill="#0b1901" transform="rotate(38 13.4 100.6)"/>
<ellipse cx="117.3" cy="221.0" rx="5.3" ry="2.9" fill="#265604" transform="rotate(-50 117.3 221.0)"/>
<ellipse cx="38.5" cy="52.3" rx="5.9" ry="4.4" fill="#1c4603" transform="rotate(-28 38.5 52.3)"/>
<ellipse cx="24.2" cy="119.7" rx="6.7" ry="3.3" fill="#091901" transform="rotate(-45 24.2 119.7)"/>
<ellipse cx="85.6" cy="138.3" rx="3.3" ry="5.6" fill="#091901" transform="rotate(34 85.6 138.3)"/>
<ellipse cx="65.4" cy="107.9" rx="5.4" ry="2.8" fill="#163902" transform="rotate(58 65.4 107.9)"/>
<ellipse cx="26.9" cy="76.2" rx="3.3" ry="2.0" fill="#1c4603" transform="rotate(-42 26.9 76.2)"/>
<ellipse cx="34.5" cy="84.3" rx="6.8" ry="5.8" fill="#163902" transform="rotate(12 34.5 84.3)"/>
<ellipse cx="20.4" cy="190.2" rx="5.8" ry="3.9" fill="#1c4603" transform="rotate(-50 20.4 190.2)"/>
<ellipse cx="114.9" cy="115.7" rx="4.2" ry="5.8" fill="#0b1e01" transform="rotate(-17 114.9 115.7)"/>
<ellipse cx="90.2" cy="6.1" rx="6.2" ry="5.9" fill="#0b1e01" transform="rotate(44 90.2 6.1)"/>
<ellipse cx="140.3" cy="116.1" rx="8.4" ry="3.4" fill="#2d6504" transform="rotate(-33 140.3 116.1)"/>
<ellipse cx="129.3" cy="73.8" rx="4.3" ry="5.2" fill="#091901" transform="rotate(58 129.3 73.8)"/>
<ellipse cx="32.4" cy="53.6" rx="5.4" ry="5.2" fill="#163902" transform="rotate(-36 32.4 53.6)"/>
<ellipse cx="59.0" cy="6.5" rx="3.2" ry="3.1" fill="#0b1e01" transform="rotate(-29 59.0 6.5)"/>
<ellipse cx="100.5" cy="77.1" rx="7.9" ry="4.9" fill="#204e03" transform="rotate(-18 100.5 77.1)"/>
<ellipse cx="13.4" cy="22.9" rx="5.8" ry="3.4" fill="#2a2a0a" transform="rotate(-2 13.4 22.9)"/>
<ellipse cx="79.6" cy="146.3" rx="3.5" ry="4.6" fill="#091901" transform="rotate(49 79.6 146.3)"/>
<ellipse cx="118.1" cy="44.6" rx="8.3" ry="3.7" fill="#1c4603" transform="rotate(16 118.1 44.6)"/>
<ellipse cx="66.6" cy="212.1" rx="4.0" ry="2.5" fill="#163902" transform="rotate(-42 66.6 212.1)"/>
<ellipse cx="133.9" cy="32.7" rx="8.0" ry="5.9" fill="#204e03" transform="rotate(19 133.9 32.7)"/>
<ellipse cx="124.4" cy="31.2" rx="8.9" ry="2.8" fill="#1c4603" transform="rotate(45 124.4 31.2)"/>
<ellipse cx="41.8" cy="65.6" rx="4.4" ry="4.3" fill="#163902" transform="rotate(-29 41.8 65.6)"/>
<ellipse cx="138.5" cy="13.6" rx="7.4" ry="5.6" fill="#091901" transform="rotate(19 138.5 13.6)"/>
<ellipse cx="150.1" cy="94.2" rx="8.5" ry="4.0" fill="#2d6504" transform="rotate(4 150.1 94.2)"/>
<ellipse cx="84.8" cy="195.5" rx="6.7" ry="5.1" fill="#265604" transform="rotate(-42 84.8 195.5)"/>
<ellipse cx="78.6" cy="162.4" rx="5.0" ry="4.1" fill="#091901" transform="rotate(7 78.6 162.4)"/>
<ellipse cx="31.8" cy="9.5" rx="3.6" ry="3.8" fill="#1c4603" transform="rotate(-57 31.8 9.5)"/>
<ellipse cx="73.6" cy="137.2" rx="6.1" ry="4.8" fill="#2d6504" transform="rotate(-6 73.6 137.2)"/>
<ellipse cx="134.0" cy="113.7" rx="4.5" ry="4.1" fill="#204e03" transform="rotate(45 134.0 113.7)"/>
<ellipse cx="74.3" cy="93.3" rx="5.4" ry="3.3" fill="#163902" transform="rotate(21 74.3 93.3)"/>
<ellipse cx="12.1" cy="150.0" rx="8.4" ry="2.6" fill="#0b1901" transform="rotate(26 12.1 150.0)"/>
<ellipse cx="23.7" cy="197.8" rx="4.3" ry="5.8" fill="#163902" transform="rotate(-12 23.7 197.8)"/>
<ellipse cx="69.9" cy="79.9" rx="3.6" ry="3.5" fill="#163902" transform="rotate(-19 69.9 79.9)"/>
<ellipse cx="73.1" cy="4.1" rx="5.0" ry="4.5" fill="#1c4603" transform="rotate(1 73.1 4.1)"/>
<ellipse cx="145.5" cy="18.8" rx="4.6" ry="5.6" fill="#091901" transform="rotate(-38 145.5 18.8)"/>
<ellipse cx="21.5" cy="94.6" rx="8.5" ry="5.3" fill="#265604" transform="rotate(-29 21.5 94.6)"/>
<ellipse cx="89.1" cy="115.3" rx="6.0" ry="3.3" fill="#091901" transform="rotate(-27 89.1 115.3)"/>
<ellipse cx="114.2" cy="95.3" rx="3.4" ry="5.8" fill="#091901" transform="rotate(16 114.2 95.3)"/>
<ellipse cx="43.9" cy="27.3" rx="3.1" ry="6.0" fill="#204e03" transform="rotate(-10 43.9 27.3)"/>

<path d="M122 24 L146 30 L140 40 L124 38 Z" fill="#51920a"/>
<path d="M142 20 L164 18 L164 38 L146 36 Z" fill="#347406"/>
<circle cx="31" cy="28" r="3" fill="#d0d0c8"/>
<circle cx="97" cy="29" r="2.5" fill="#c8c8c0"/>
<circle cx="62" cy="72" r="3" fill="#c0c0b8"/>
<circle cx="26" cy="34" r="1.8" fill="#b0b0a0"/>
<ellipse cx="8" cy="50" rx="2.2" ry="5" fill="#c06a20" transform="rotate(-20 8 50)"/>
<circle cx="20" cy="81" r="2" fill="#a04a18"/>
<circle cx="14" cy="34" r="3" fill="#438306"/>
<circle cx="41" cy="164" r="4" fill="#b0b838"/>
<circle cx="34" cy="153" r="3" fill="#a0a830"/>
<path d="M40 190 L50 175" stroke="#4a8a18" stroke-width="3"/>
</g>
<g filter="url(#tb2_713)">
<path d="M78 136 L95 151 L112 190 M93 116 L95 151" fill="none" stroke="#4a7a14" stroke-width="1.6"/>
<path d="M94 111 C92 100 96 90 105 80 C115 72 125 68 138 67 C136 72 133 77 125 82 C115 88 105 95 100 100 C97 104 96 108 95.6 111 Z" fill="url(#lgA_713)"/>
<path d="M73 82 L80 77 L88.6 81.6 L95.6 80 L97.7 87 L92.8 97 L85.8 105.4 L78.8 99.8 L72.5 90 Z" fill="#b0c048"/>
<path d="M2 105 C10 100 20 97 34 95 C45 95 55 96 69 101 C72 104 74 108 75 111 C60 109 45 106 30 104 C20 103 10 104 2 105 Z" fill="#ccb444"/>
<path d="M44 125 C50 120 56 117 63 116.7 L78 115.2 L100.7 118 L90.8 129.4 L78 135 L65.4 140.7 L58.3 150.6 L49.9 146.3 L44.2 135 Z" fill="url(#lgB_713)"/>
<path d="M10.3 140.7 L20.2 130.8 L42.8 126.5 L42.8 132.2 L27.3 137.8 L11.7 142.8 Z" fill="#b8c040"/>
<path d="M102 133.6 L126 133.6 L147 133.6 L161.5 142 L163 150.6 L154.4 163.3 L137.5 156 L119 147.7 L107.8 140.7 Z" fill="url(#lgC_713)"/>
<path d="M72.5 150.6 L89.4 150.6 L96.5 161.9 L93.7 171.8 L78 173.2 L72.5 164.7 Z" fill="#438905"/>
<path d="M44.2 181.6 L55.5 167.5 L72.5 153.4 L78 167.5 L62.6 178.8 Z" fill="#519206"/>
<path d="M49.9 221.2 L69.6 207 L86.6 197 L100.7 201.4 L89.4 210 L69.6 221 Z" fill="#5fa206"/>
<path d="M105 195.8 L120.5 194.4 L123.3 210 L115 222.6 L106.4 212.7 Z" fill="#5fa206"/>
<path d="M126 198.6 L139 201.4 L140.3 217 L130.4 222.6 L124 210 Z" fill="#569806"/>
<path d="M146 201.4 L164.3 190 L164.3 204 L148.8 208.5 Z" fill="#65a708"/>
<path d="M83.8 210 L105 210 L106.4 222.6 L89.4 222.6 Z" fill="#438305"/>
</g>
</svg>
<svg style="left:262px;top:145px" width="200" height="28" viewBox="262 145 200 28">
<path d="M267.5 171.5V149.5a2 2 0 0 1 2-2H344l12 12v12" fill="#f0f0f0" stroke="#c9c9c9"/>
<path d="M356.5 171.5V149.5a2 2 0 0 1 2-2H433l23.5 24" fill="#fafafa" stroke="#c9c9c9"/>
</svg>
<div class="t" style="left:297.5px;top:154.10px;font-size:11.7px;color:#1a1a1a;">Edit</div>
<div class="t" style="left:375.0px;top:154.10px;font-size:11.7px;color:#1a1a1a;">Preview</div>
<div class="t" style="left:1299.0px;top:149.34px;font-size:12px;color:#1a1a1a;">Begin enjoying full version immediately.</div>
<div class="t" style="left:1514.0px;top:149.34px;font-size:12px;color:#0b62c9;font-weight:bold;text-decoration:underline">Order Now</div>
<div class="a" style="left:267px;top:171px;width:1324px;height:495px;border:1px solid #cdcdcd;background:#fff"></div>
<div class="a" style="left:1574px;top:172px;width:16px;height:493px;background:#f0f0f0"></div>
<div class="a" style="left:1581px;top:189px;width:2px;height:133px;background:#8a8a8a;border-radius:1px"></div>
<svg style="left:281px;top:172px;overflow:hidden" width="1279" height="493" viewBox="281 172 1279 493">
<defs>
<filter id="b30" x="-50%" y="-50%" width="200%" height="200%"><feGaussianBlur stdDeviation="26"/></filter>
<filter id="b12" x="-50%" y="-50%" width="200%" height="200%"><feGaussianBlur stdDeviation="11"/></filter>
<filter id="b6" x="-50%" y="-50%" width="200%" height="200%"><feGaussianBlur stdDeviation="6"/></filter>
<filter id="b3" x="-50%" y="-50%" width="200%" height="200%"><feGaussianBlur stdDeviation="3.5"/></filter>
<filter id="noise" x="0" y="0" width="100%" height="100%"><feTurbulence type="fractalNoise" baseFrequency="0.08" numOctaves="2" seed="3"/><feColorMatrix type="matrix" values="0 0 0 0 0.5  0 0 0 0 0.6  0 0 0 0 0.2  0 0 0 0.9 -0.35"/></filter>
</defs>
<rect x="281" y="172" width="1279" height="493" fill="#0e2c02"/>
<g filter="url(#b30)">
  <ellipse cx="290" cy="540" rx="45" ry="120" fill="#0a1800"/><ellipse cx="295" cy="400" rx="40" ry="50" fill="#22280a"/>
  <ellipse cx="300" cy="230" rx="40" ry="60" fill="#122400"/>
  <ellipse cx="410" cy="290" rx="60" ry="80" fill="#081d01"/>
  <ellipse cx="450" cy="570" rx="60" ry="50" fill="#0a2101"/>
  
  <ellipse cx="520" cy="190" rx="90" ry="25" fill="#153202"/>
  <ellipse cx="800" cy="195" rx="150" ry="35" fill="#0c3200"/>
  <ellipse cx="560" cy="645" rx="90" ry="30" fill="#123402"/>
  <ellipse cx="780" cy="640" rx="120" ry="35" fill="#103202"/>
  <ellipse cx="590" cy="590" rx="50" ry="60" fill="#1a4402"/><ellipse cx="610" cy="400" rx="40" ry="60" fill="#163a00"/>
  <ellipse cx="1030" cy="195" rx="100" ry="35" fill="#0e3600"/>
  <ellipse cx="1040" cy="330" rx="60" ry="50" fill="#164002"/>
  <ellipse cx="1110" cy="560" rx="90" ry="60" fill="#0c2c00"/>
  <ellipse cx="1290" cy="545" rx="100" ry="60" fill="#082501"/>
  <ellipse cx="1440" cy="570" rx="90" ry="70" fill="#134002"/><ellipse cx="1540" cy="660" rx="60" ry="40" fill="#052600"/>
  <ellipse cx="1320" cy="230" rx="80" ry="50" fill="#0a2c01"/>
  <ellipse cx="1520" cy="220" rx="50" ry="50" fill="#0b2e01"/>
</g>
<g filter="url(#b12)">
  <!-- big medium leaf right -->
  <path d="M1085 375 L1164 332 L1257 301 L1324 280 L1380 295 L1423 338 L1411 363 L1349 350 L1288 356 L1238 369 L1183 449 L1115 467 L1085 430 Z" fill="#124600"/>
  <path d="M1380 400 L1533 326 L1561 316 L1561 480 L1470 470 L1380 430 Z" fill="#134800"/>
  <ellipse cx="334" cy="202" rx="20" ry="20" fill="#7a6612"/>
  <ellipse cx="309" cy="255" rx="18" ry="16" fill="#4a2a08"/><ellipse cx="326" cy="276" rx="22" ry="22" fill="#a08012"/>
  <ellipse cx="295" cy="310" rx="22" ry="14" fill="#2e5302"/>
  <ellipse cx="293" cy="381" rx="14" ry="18" fill="#5a3a0c"/>
  <ellipse cx="392" cy="432" rx="26" ry="26" fill="#588402"/>
  <ellipse cx="496" cy="504" rx="32" ry="28" fill="#3b7703"/>
  <ellipse cx="465" cy="447" rx="22" ry="20" fill="#4e3a0e"/>
  <ellipse cx="295" cy="400" rx="16" ry="30" fill="#3a2a0a"/>
  <ellipse cx="600" cy="650" rx="30" ry="20" fill="#1d4502"/>
  <path d="M463 195 L560 208 L623 198 L623 226 L600 236 L598 320 L570 332 L548 300 L545 240 L470 220 Z" fill="#265d03"/><ellipse cx="566" cy="182" rx="30" ry="12" fill="#0a2301"/>
  <path d="M324 508 Q336 494 350 504 L378 585 Q378 610 358 606 Z" fill="#a85a1c"/><ellipse cx="362" cy="585" rx="15" ry="18" fill="#d07422"/>
  <ellipse cx="721" cy="224" rx="25" ry="14" fill="#557702"/>
  <ellipse cx="600" cy="190" rx="40" ry="16" fill="#2e5b03"/>
  <ellipse cx="880" cy="180" rx="25" ry="12" fill="#5a4a10"/>
  <ellipse cx="1165" cy="266" rx="36" ry="36" fill="#ae9a1a"/>
  <ellipse cx="1135" cy="310" rx="30" ry="22" fill="#88a018"/>
  <ellipse cx="1244" cy="230" rx="32" ry="22" fill="#488407"/>
  <ellipse cx="1060" cy="252" rx="20" ry="18" fill="#8a8a20"/>
  <ellipse cx="1005" cy="332" rx="16" ry="14" fill="#255303"/>
  <ellipse cx="1060" cy="449" rx="22" ry="14" fill="#558405"/>
  <ellipse cx="1318" cy="590" rx="16" ry="12" fill="#487704"/>
  <ellipse cx="1534" cy="262" rx="12" ry="30" fill="#587e08"/>
  <path d="M1030 560 L1060 555 L1150 625 L1135 655 Z" fill="#2c6a06"/><path d="M1180 480 L1215 480 L1140 590 L1115 580 Z" fill="#285e06"/>
  <ellipse cx="1000" cy="200" rx="30" ry="20" fill="#5a6a18"/>
  <ellipse cx="1400" cy="560" rx="60" ry="40" fill="#184302"/>
</g>
<g filter="url(#b12)">
  <ellipse cx="571" cy="188" rx="14" ry="16" fill="#0b2801"/>
  <ellipse cx="690" cy="206" rx="14" ry="16" fill="#0a2301"/>
  <ellipse cx="850" cy="205" rx="26" ry="20" fill="#0a2301"/>
</g>
<g filter="url(#b12)">
  <path d="M960 560 L1030 575 L1110 650 L1110 690 L940 690 Z" fill="#031800"/>
  <ellipse cx="1010" cy="480" rx="40" ry="40" fill="#1f5208"/>
  <ellipse cx="900" cy="650" rx="60" ry="20" fill="#0a2400"/>
</g>
<g filter="url(#b12)"><ellipse cx="1350" cy="492" rx="55" ry="22" fill="#284800"/></g>
<g filter="url(#b12)"><ellipse cx="335" cy="635" rx="40" ry="30" fill="#262e00"/></g>
<g filter="url(#b6)">
  <ellipse cx="873" cy="176" rx="18" ry="9" fill="#6a4a10"/>
  <ellipse cx="925" cy="178" rx="30" ry="10" fill="#6a7a18"/>
  <ellipse cx="717" cy="224" rx="16" ry="12" fill="#557703"/>
  <ellipse cx="930" cy="225" rx="40" ry="12" fill="#325b03"/>
  

  <ellipse cx="388" cy="186" rx="15" ry="16" fill="#a8a872"/><ellipse cx="392" cy="205" rx="14" ry="16" fill="#7e8848"/>
  <ellipse cx="529" cy="387" rx="30" ry="19" fill="#b8b2aa" transform="rotate(35 529 387)"/>
  <ellipse cx="474" cy="373" rx="15" ry="14" fill="#a09072"/><ellipse cx="478" cy="397" rx="12" ry="11" fill="#8a8062"/>
  <ellipse cx="523" cy="430" rx="15" ry="14" fill="#a09888"/>
  <ellipse cx="558" cy="473" rx="9" ry="10" fill="#3e3a18"/>
  
  <ellipse cx="1038" cy="393" rx="18" ry="19" fill="#6a7a40"/><ellipse cx="1038" cy="393" rx="13" ry="14" fill="#b8b0a4"/>
  <ellipse cx="1029" cy="541" rx="14" ry="15" fill="#4e6e2c"/>
  <ellipse cx="1201" cy="240" rx="11" ry="14" fill="#0a1d01"/>
  <ellipse cx="1049" cy="280" rx="14" ry="10" fill="#0a1a01"/>
  <path d="M1275 352 L1410 366 L1395 390 L1280 380 Z" fill="#072301"/>
  <ellipse cx="1546" cy="504" rx="14" ry="20" fill="#629705"/>
  <path d="M1380 172 L1408 172 L1490 252 L1524 328 L1510 334 L1472 264 Z" fill="#52780a"/><ellipse cx="1450" cy="180" rx="9" ry="10" fill="#a08a10"/>
  <path d="M1460 172 L1476 172 L1494 252 L1484 256 Z" fill="#3a6a08"/>
  <path d="M1470 262 L1478 268 L1442 320 L1432 314 Z" fill="#5a4a0a"/>
</g>
<g filter="url(#b3)">
  <path d="M1232 363 C1260 366 1290 372 1300 375 C1330 385 1360 392 1380 400 C1382 412 1378 422 1374 430 C1350 445 1335 455 1324 461 C1300 468 1285 472 1275 473 C1250 470 1235 468 1226 467 C1210 470 1195 472 1183 473 C1195 450 1205 435 1214 418 C1222 400 1228 380 1232 363 Z" fill="#52940a"/>
  <path d="M1215 440 C1250 430 1300 435 1335 452 C1310 466 1270 474 1226 470 C1210 468 1200 470 1190 472 Z" fill="#6c9e0c"/>
  <path d="M1376 398 C1430 375 1490 345 1561 312 L1561 322 C1490 355 1430 390 1378 412 Z" fill="#5aa010"/>
</g>
<rect x="281" y="172" width="1279" height="493" filter="url(#noise)" opacity="0.5" style="mix-blend-mode:soft-light"/>
</svg>

<svg style="left:262px;top:672px" width="300" height="30" viewBox="262 672 300 30">
<path d="M267.5 700.5V678.5a2 2 0 0 1 2-2H402l6 6v18" fill="#f0f0f0" stroke="#c9c9c9"/>
<path d="M408.5 700.5V678.5a2 2 0 0 1 2-2H513l23.5 24" fill="#fafafa" stroke="#c9c9c9"/>
</svg>
<div class="a" style="left:267px;top:700px;width:1324px;height:100px;border:1px solid #cdcdcd;border-bottom:none;background:#fafafa"></div>
<svg style="left:262px;top:672px" width="300" height="30" viewBox="262 672 300 30"><path d="M409 700.5H536" stroke="#fafafa" stroke-width="1.5"/></svg>
<div class="t" style="left:277.0px;top:683.10px;font-size:11.7px;color:#1a1a1a;">Animation Properties</div>
<div class="t" style="left:418.0px;top:683.10px;font-size:11.7px;color:#1a1a1a;">Frame Properties</div>
<div class="t" style="left:284.0px;top:721.60px;font-size:11.7px;color:#1a1a1a;"><u>D</u>elay:</div>
<div class="a" style="left:356px;top:717px;width:47px;height:23px;background:#fff;border:1px solid #d5d5d5;border-bottom:1px solid #888"></div>
<div class="t" style="left:359.5px;top:722.77px;font-size:11.5px;color:#1a1a1a;">50</div>
<svg style="left:388px;top:719px" width="14" height="20"><rect x="1.5" y="0.5" width="11" height="8" fill="#f4f4f4" stroke="#d0d0d0"/><rect x="1.5" y="9.5" width="11" height="8" fill="#f4f4f4" stroke="#d0d0d0"/><path d="M4.5 6l2.5-3 2.5 3z M4.5 12l2.5 3 2.5-3z" fill="#333"/></svg>
<div class="t" style="left:412.0px;top:722.60px;font-size:11.7px;color:#1a1a1a;">1/100th sec</div>
<div class="a" style="left:1398px;top:716px;width:178px;height:25px;background:#fdfdfd;border:1px solid #cfcfcf;border-radius:3px"></div>
<div class="a" style="left:1398px;top:752px;width:178px;height:25px;background:#fdfdfd;border:1px solid #cfcfcf;border-radius:3px"></div>
<svg style="left:1403px;top:720px" width="18" height="18" viewBox="0 0 18 18">
<rect x="1" y="1" width="4" height="4" fill="#8aa8d0"/><rect x="9" y="1" width="4" height="4" fill="#8aa8d0"/>
<rect x="5" y="5" width="4" height="4" fill="#b8cce6"/><rect x="13" y="5" width="4" height="4" fill="#d8e4f2"/>
<rect x="1" y="9" width="4" height="4" fill="#d8e4f2"/><rect x="9" y="9" width="4" height="4" fill="#b8cce6"/>
<rect x="5" y="13" width="4" height="4" fill="#b8cce6"/><rect x="13" y="13" width="4" height="4" fill="#eef2f8"/>
</svg>
<svg style="left:1403px;top:756px" width="18" height="18" viewBox="0 0 18 18">
<path d="M1.5 1.5h14v10h-9l-4 4v-4h-1z" fill="#fff" stroke="#555"/>
<path d="M4 4.5h9M4 6.5h9M4 8.5h9" stroke="#2e6db4"/>
</svg>
<div class="t" style="left:1424.0px;top:723.10px;font-size:11.7px;color:#1a1a1a;">Set Transparency</div>
<div class="t" style="left:1424.0px;top:759.10px;font-size:11.7px;color:#1a1a1a;">Image Comment</div>
<div class="a" style="left:838px;top:630px;width:164px;height:28px;background:linear-gradient(#e4e4e4,#ececec 50%,#dedede)"></div>
<svg style="left:838px;top:630px" width="164" height="28" viewBox="838 630 164 28">
<path d="M844.5 634.5l15 8.5-15 8.5z" fill="#666"/>
<rect x="870.5" y="635.5" width="4.5" height="15" fill="#3468a8"/>
<rect x="878" y="635.5" width="4.5" height="15" fill="#3468a8"/>
<path d="M892.5 632.5v21" stroke="#666" stroke-width="1.2"/>
<rect x="903" y="635" width="3.5" height="16" fill="#3468a8"/><path d="M919 635v16l-12-8z" fill="#3468a8"/>
<path d="M936 635v16l-8-8z M945 635v16l-8-8z" fill="#3468a8"/>
<path d="M955 635v16l8-8z M963 635v16l8-8z" fill="#3468a8"/>
<path d="M982 635v16l12-8z" fill="#3468a8"/><rect x="994" y="635" width="3.5" height="16" fill="#3468a8"/>
</svg>
<div class="a" style="left:623px;top:234px;width:353px;height:381px;border-radius:8px;box-shadow:0 4px 14px rgba(0,0,0,.35);background:#f0f0f0;overflow:hidden"><div class="a" style="left:0;top:0;width:353px;height:25px;background:#eff3f8"></div></div>
<div class="t" style="left:626.0px;top:241.60px;font-size:11.1px;color:#1a1a1a;">Resize Canvas</div>
<svg style="left:954px;top:239px" width="14" height="14"><path d="M2 2l10 10M12 2L2 12" stroke="#222" stroke-width="1.1"/></svg>
<svg style="left:638px;top:275px" width="15" height="15"><circle cx="7.25" cy="6.75" r="6.5" fill="#0c5fc0"/><circle cx="7.25" cy="6.75" r="2.6" fill="#fff"/></svg>
<div class="t" style="left:655.0px;top:276.43px;font-size:11.3px;color:#1a1a1a;">Size in Pixels</div>
<div class="t" style="left:663.0px;top:308.77px;font-size:11.5px;color:#1a1a1a;"><u>W</u>idth:</div>
<div class="t" style="left:831.0px;top:308.77px;font-size:11.5px;color:#1a1a1a;"><u>H</u>eight:</div>
<div class="a" style="left:720px;top:304px;width:55px;height:22px;background:#fff;border:1px solid #dadada;border-bottom:1px solid #8a8a8a;border-radius:2px"></div>
<div class="t" style="left:722.5px;top:309.77px;font-size:11.5px;color:#1a1a1a;">1279</div>
<svg style="left:759px;top:306px" width="14" height="19"><rect x="0.5" y="0.5" width="12" height="8" fill="#f2f2f2" stroke="#cfcfcf"/><rect x="0.5" y="9.5" width="12" height="8" fill="#f2f2f2" stroke="#cfcfcf"/><path d="M3.5 6.5l3-3 3 3z M3.5 11.5l3 3 3-3z" fill="#333"/></svg>
<div class="a" style="left:879px;top:304px;width:56px;height:22px;background:#fff;border:1px solid #dadada;border-bottom:1px solid #8a8a8a;border-radius:2px"></div>
<div class="t" style="left:881.5px;top:309.77px;font-size:11.5px;color:#1a1a1a;">1706</div>
<svg style="left:919px;top:306px" width="14" height="19"><rect x="0.5" y="0.5" width="12" height="8" fill="#f2f2f2" stroke="#cfcfcf"/><rect x="0.5" y="9.5" width="12" height="8" fill="#f2f2f2" stroke="#cfcfcf"/><path d="M3.5 6.5l3-3 3 3z M3.5 11.5l3 3 3-3z" fill="#333"/></svg>
<div class="t" style="left:783.0px;top:308.77px;font-size:11.5px;color:#1a1a1a;">px</div>
<div class="t" style="left:943.0px;top:308.77px;font-size:11.5px;color:#1a1a1a;">px</div>
<svg style="left:638px;top:349px" width="15" height="15"><circle cx="7.25" cy="6.75" r="6" fill="#fff" stroke="#555" stroke-width="1"/></svg>
<div class="t" style="left:655.0px;top:350.43px;font-size:11.3px;color:#1a1a1a;">Size in Percentage</div>
<div class="t" style="left:663.0px;top:380.77px;font-size:11.5px;color:#1a1a1a;">W<u>i</u>dth:</div>
<div class="t" style="left:831.0px;top:380.77px;font-size:11.5px;color:#1a1a1a;">H<u>e</u>ight:</div>
<div class="a" style="left:720px;top:376px;width:55px;height:21px;background:#f0f0f0;border:1px solid #dadada;border-bottom:1px solid #dadada;border-radius:2px"></div>
<div class="t" style="left:722.5px;top:381.77px;font-size:11.5px;color:#9a9a9a;">100</div>
<svg style="left:759px;top:378px" width="14" height="19"><rect x="0.5" y="0.5" width="12" height="8" fill="#f2f2f2" stroke="#cfcfcf"/><rect x="0.5" y="9.5" width="12" height="8" fill="#f2f2f2" stroke="#cfcfcf"/><path d="M3.5 6.5l3-3 3 3z M3.5 11.5l3 3 3-3z" fill="#9a9a9a"/></svg>
<div class="a" style="left:879px;top:376px;width:56px;height:21px;background:#f0f0f0;border:1px solid #dadada;border-bottom:1px solid #dadada;border-radius:2px"></div>
<div class="t" style="left:881.5px;top:381.77px;font-size:11.5px;color:#9a9a9a;">100</div>
<svg style="left:919px;top:378px" width="14" height="19"><rect x="0.5" y="0.5" width="12" height="8" fill="#f2f2f2" stroke="#cfcfcf"/><rect x="0.5" y="9.5" width="12" height="8" fill="#f2f2f2" stroke="#cfcfcf"/><path d="M3.5 6.5l3-3 3 3z M3.5 11.5l3 3 3-3z" fill="#9a9a9a"/></svg>
<div class="t" style="left:783.0px;top:380.77px;font-size:11.5px;color:#1a1a1a;">%</div>
<div class="t" style="left:943.0px;top:380.77px;font-size:11.5px;color:#1a1a1a;">%</div>
<svg style="left:639px;top:421px" width="14" height="14"><rect x="0" y="0" width="13" height="13" rx="2" fill="#0c5fc0"/><path d="M3.2 6.8l2.3 2.3 4.5-4.8" fill="none" stroke="#fff" stroke-width="1.2"/></svg>
<div class="t" style="left:655.0px;top:422.43px;font-size:11.3px;color:#1a1a1a;"><u>M</u>aintain aspect ratio</div>
<div class="t" style="left:639.0px;top:460.43px;font-size:11.3px;color:#1a1a1a;">Anchor:</div>
<div class="a" style="left:642px;top:485px;width:32px;height:32px;border:1px solid #111;background:#f0f0f0"></div>
<svg style="left:642px;top:485px" width="32" height="32"><path d="M12 12h10v3h-7v7h-3z" fill="#111" fill-rule="evenodd"/></svg>
<div class="a" style="left:681px;top:485px;width:32px;height:32px;border:1px solid #111;background:#f0f0f0"></div>
<svg style="left:681px;top:485px" width="32" height="32"><path d="M8 18.5L15.8 10.5L23.5 18.5H20L15.8 15L11.5 18.5z" fill="#111" fill-rule="evenodd"/></svg>
<div class="a" style="left:720px;top:485px;width:32px;height:32px;border:1px solid #111;background:#f0f0f0"></div>
<svg style="left:720px;top:485px" width="32" height="32"><path d="M10 12h10v10h-3v-7h-7z" fill="#111" fill-rule="evenodd"/></svg>
<div class="a" style="left:642px;top:525px;width:32px;height:32px;border:1px solid #111;background:#f0f0f0"></div>
<svg style="left:642px;top:525px" width="32" height="32"><path d="M18 8L10 15.5L18 23V19.5L14.5 15.5L18 11.5z" fill="#111" fill-rule="evenodd"/></svg>
<div class="a" style="left:678px;top:521px;width:38px;height:39px;border:2px solid #a8d4fa;border-radius:4px;background:#cce4f7"></div>
<div class="a" style="left:682px;top:525px;width:32px;height:32px;border:1px solid #111;background:#cce4f7"></div>
<svg style="left:682px;top:525px" width="32" height="32"><path d="M10 10h12v12h-12z M13 13v6h6v-6z" fill="#111" fill-rule="evenodd"/></svg>
<div class="a" style="left:720px;top:525px;width:32px;height:32px;border:1px solid #111;background:#f0f0f0"></div>
<svg style="left:720px;top:525px" width="32" height="32"><path d="M14 8L22 15.5L14 23V19.5L17.5 15.5L14 11.5z" fill="#111" fill-rule="evenodd"/></svg>
<div class="a" style="left:642px;top:565px;width:32px;height:32px;border:1px solid #111;background:#f0f0f0"></div>
<svg style="left:642px;top:565px" width="32" height="32"><path d="M12 12h3v7h7v3h-10z" fill="#111" fill-rule="evenodd"/></svg>
<div class="a" style="left:681px;top:565px;width:32px;height:32px;border:1px solid #111;background:#f0f0f0"></div>
<svg style="left:681px;top:565px" width="32" height="32"><path d="M8.5 12L15.8 20L23.5 12H20L15.8 15.5L11.5 12z" fill="#111" fill-rule="evenodd"/></svg>
<div class="a" style="left:720px;top:565px;width:32px;height:32px;border:1px solid #111;background:#f0f0f0"></div>
<svg style="left:720px;top:565px" width="32" height="32"><path d="M19 12h3v10h-10v-3h7z" fill="#111" fill-rule="evenodd"/></svg>
<div class="a" style="left:792px;top:575px;width:79px;height:25px;background:#fdfdfd;border:1px solid #1a6fcf;border-radius:4px;box-shadow:0 0 0 0.4px #1a6fcf"></div>
<div class="a" style="left:880px;top:575px;width:79px;height:25px;background:#fdfdfd;border:1px solid #d0d0d0;border-radius:3px"></div>
<div class="t" style="left:631.0px;width:400px;text-align:center;top:582.27px;font-size:11.5px;color:#111;">OK</div>
<div class="t" style="left:719.0px;width:400px;text-align:center;top:582.27px;font-size:11.5px;color:#111;">Cancel</div>
</body></html>
